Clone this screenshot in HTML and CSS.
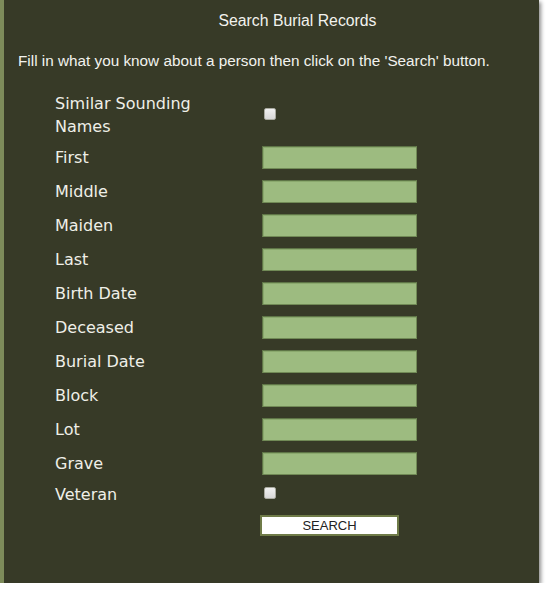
FILE: index.html
```html
<!DOCTYPE html>
<html>
<head>
<meta charset="utf-8">
<link rel="stylesheet" href="styles.css">
</head>
<body>
<div class="panel">
  <h1 class="title">Search Burial Records</h1>
  <p class="intro">Fill in what you know about a person then click on the 'Search' button.</p>
  <form class="form">
    <div class="row row-tall"><label class="label">Similar Sounding Names</label><input class="check" type="checkbox"></div>
    <div class="row"><label class="label">First</label><input class="field" type="text"></div>
    <div class="row"><label class="label">Middle</label><input class="field" type="text"></div>
    <div class="row"><label class="label">Maiden</label><input class="field" type="text"></div>
    <div class="row"><label class="label">Last</label><input class="field" type="text"></div>
    <div class="row"><label class="label">Birth Date</label><input class="field" type="text"></div>
    <div class="row"><label class="label">Deceased</label><input class="field" type="text"></div>
    <div class="row"><label class="label">Burial Date</label><input class="field" type="text"></div>
    <div class="row"><label class="label">Block</label><input class="field" type="text"></div>
    <div class="row"><label class="label">Lot</label><input class="field" type="text"></div>
    <div class="row"><label class="label">Grave</label><input class="field" type="text"></div>
    <div class="row row-short"><label class="label">Veteran</label><input class="check" type="checkbox"></div>
    <div class="row row-button"><span class="label"></span><button class="search" type="button">SEARCH</button></div>
  </form>
</div>
</body>
</html>
```
FILE: styles.css
```css
html, body {
  margin: 0;
  padding: 0;
  background: #ffffff;
}
.panel {
  width: 539px;
  height: 583px;
  box-sizing: border-box;
  background: #373a27;
  border-left: 4px solid #7d8b5a;
  box-shadow: 2px 2px 4px rgba(0, 0, 0, 0.45);
  display: flex;
  flex-direction: column;
}
.title {
  margin: 0;
  padding-top: 11px;
  height: 20px;
  line-height: 20px;
  font-family: "Liberation Sans", Arial, sans-serif;
  font-weight: normal;
  font-size: 15.8px;
  color: #f2f2ee;
  text-align: center;
  padding-left: 52px;
  box-sizing: content-box;
}
.intro {
  margin: 20px 0 0 14px;
  height: 20px;
  line-height: 20px;
  font-family: "Liberation Sans", Arial, sans-serif;
  font-size: 15.3px;
  color: #f2f2ee;
}
.form {
  margin: 20px 0 0 51px;
  display: flex;
  flex-direction: column;
}
.row {
  display: flex;
  align-items: center;
  height: 34px;
}
.row-tall {
  height: 49px;
}
.row-short {
  height: 28px;
}
.row-button {
  height: 21px;
  margin-top: 7px;
}
.label {
  width: 207px;
  flex: none;
  font-family: "DejaVu Sans", Verdana, sans-serif;
  font-size: 16px;
  line-height: 23px;
  color: #efefe8;
  padding-right: 40px;
  box-sizing: border-box;
}
.row-tall .label {
  margin-top: -2px;
}
.field {
  width: 155px;
  height: 23px;
  box-sizing: border-box;
  margin: 0;
  background: #9dbb80;
  border: 1px solid #718a56;
  border-top-color: #5e7446;
  border-left-color: #5e7446;
  box-shadow: inset 1px 1px 0 #8aa86d;
  outline: none;
}
.check {
  appearance: none;
  -webkit-appearance: none;
  width: 12px;
  height: 12px;
  margin: 0 0 0 2px;
  box-sizing: border-box;
  background: linear-gradient(#f0f0f0, #d8d8d8);
  border: 1px solid #a9aaa0;
  border-radius: 2px;
}
.row-tall .check {
  margin-top: -3px;
}
.row-short .check {
  margin-top: -3px;
}
.search {
  margin: 0 0 0 -2px;
  width: 139px;
  height: 21px;
  box-sizing: border-box;
  background: #ffffff;
  border: 2px solid #6f7b48;
  padding: 0;
  font-family: "Liberation Sans", Arial, sans-serif;
  font-size: 13px;
  color: #222222;
  line-height: 17px;
}
```
